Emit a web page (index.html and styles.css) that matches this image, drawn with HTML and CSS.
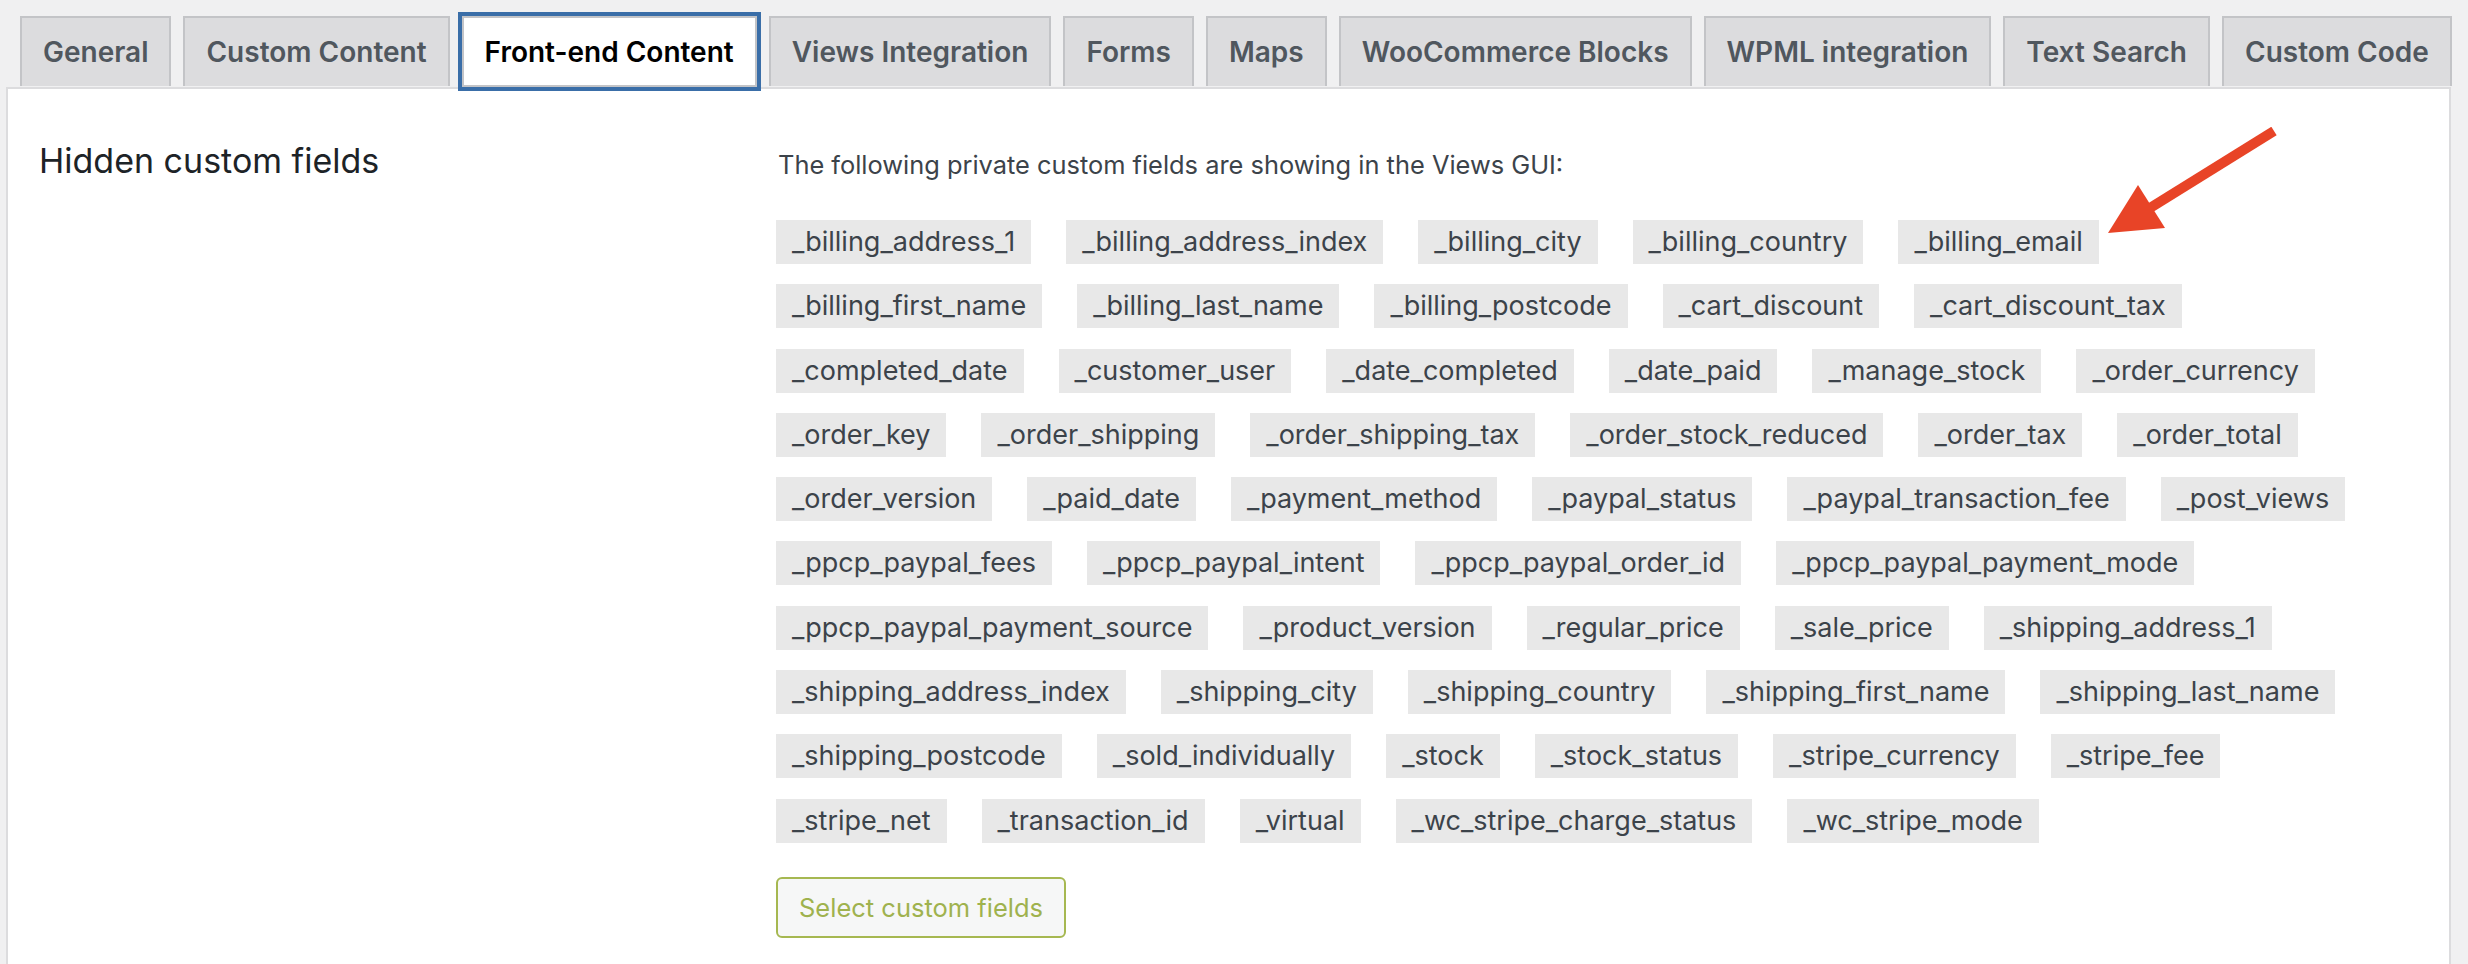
FILE: index.html
```html
<!DOCTYPE html>
<html>
<head>
<meta charset="utf-8">
<title>Settings</title>
<link rel="stylesheet" href="styles.css">
</head>
<body>
<div class="wrap">

	<!-- onglets des réglages -->
	<nav class="tabs">
		<a class="tab" href="#">General</a>
		<a class="tab" href="#">Custom Content</a>
		<a class="tab tab-active" href="#">Front-end Content</a>
		<a class="tab" href="#">Views Integration</a>
		<a class="tab" href="#">Forms</a>
		<a class="tab" href="#">Maps</a>
		<a class="tab" href="#">WooCommerce Blocks</a>
		<a class="tab" href="#">WPML integration</a>
		<a class="tab" href="#">Text Search</a>
		<a class="tab" href="#">Custom Code</a>
	</nav>

	<div class="panel">
		<div class="row">
			<h2 class="row-title">Hidden custom fields</h2>
			<div class="row-body">
				<p class="intro">The following private custom fields are showing in the Views GUI:</p>
				<div class="field-list">
					<span class="field">_billing_address_1</span>
					<span class="field">_billing_address_index</span>
					<span class="field">_billing_city</span>
					<span class="field">_billing_country</span>
					<span class="field">_billing_email</span>
					<span class="field">_billing_first_name</span>
					<span class="field">_billing_last_name</span>
					<span class="field">_billing_postcode</span>
					<span class="field">_cart_discount</span>
					<span class="field">_cart_discount_tax</span>
					<span class="field">_completed_date</span>
					<span class="field">_customer_user</span>
					<span class="field">_date_completed</span>
					<span class="field">_date_paid</span>
					<span class="field">_manage_stock</span>
					<span class="field">_order_currency</span>
					<span class="field">_order_key</span>
					<span class="field">_order_shipping</span>
					<span class="field">_order_shipping_tax</span>
					<span class="field">_order_stock_reduced</span>
					<span class="field">_order_tax</span>
					<span class="field">_order_total</span>
					<span class="field">_order_version</span>
					<span class="field">_paid_date</span>
					<span class="field">_payment_method</span>
					<span class="field">_paypal_status</span>
					<span class="field">_paypal_transaction_fee</span>
					<span class="field">_post_views</span>
					<span class="field">_ppcp_paypal_fees</span>
					<span class="field">_ppcp_paypal_intent</span>
					<span class="field">_ppcp_paypal_order_id</span>
					<span class="field">_ppcp_paypal_payment_mode</span>
					<span class="field">_ppcp_paypal_payment_source</span>
					<span class="field">_product_version</span>
					<span class="field">_regular_price</span>
					<span class="field">_sale_price</span>
					<span class="field">_shipping_address_1</span>
					<span class="field">_shipping_address_index</span>
					<span class="field">_shipping_city</span>
					<span class="field">_shipping_country</span>
					<span class="field">_shipping_first_name</span>
					<span class="field">_shipping_last_name</span>
					<span class="field">_shipping_postcode</span>
					<span class="field">_sold_individually</span>
					<span class="field">_stock</span>
					<span class="field">_stock_status</span>
					<span class="field">_stripe_currency</span>
					<span class="field">_stripe_fee</span>
					<span class="field">_stripe_net</span>
					<span class="field">_transaction_id</span>
					<span class="field">_virtual</span>
					<span class="field">_wc_stripe_charge_status</span>
					<span class="field">_wc_stripe_mode</span>
				</div>
				<button class="btn-select" type="button">Select custom fields</button>
			</div>
		</div>

		<!-- flèche rouge -->
		<svg class="pointer" width="180" height="110" viewBox="0 0 180 110">
			<line x1="172" y1="4" x2="48" y2="81" stroke="#e84427" stroke-width="10"/>
			<polygon points="6,106 36,58 63,101" fill="#e84427"/>
		</svg>
	</div>

</div>
</body>
</html>
```

FILE: styles.css
```css
body {
margin: 0;
background-color: #f0f0f1;
font-family: Inter, "Liberation Sans", sans-serif;
color: #3c434a;
}
.wrap {
padding-top: 16px;
padding-left: 6px;
padding-right: 17px;
}

/* onglets */
.tabs {
display: flex;
gap: 12px;
padding-left: 14px;
}
.tab {
display: flex;
align-items: center;
height: 70px;
box-sizing: border-box;
padding: 0 21px;
background: #dcdcde;
border: 2px solid #c3c4c7;
border-bottom: none;
color: #50575e;
font-size: 28px;
font-weight: 600;
text-decoration: none;
white-space: nowrap;
}
.tab-active {
position: relative;
z-index: 2;
height: 71px;
background: #fff;
color: #000;
border-bottom: 2px solid #c3c4c7;
box-shadow: 0 0 0 4px #3a6ea8;
}

/* bloc principal */
.panel {
position: relative;
min-height: 900px;
background: #fff;
border: 2px solid #dcdcde;
padding: 50px 0 0 31px;
}
.row {
display: flex;
align-items: flex-start;
}
.row-title {
flex: 0 0 737px;
margin: 0;
font-size: 34px;
line-height: 44px;
font-weight: 400;
color: #1d2327;
}
.row-body {
padding-top: 8px;
}
.intro {
margin: 0 0 37px 2px;
font-size: 25.4px;
line-height: 36px;
color: #3c434a;
}
.field-list {
display: flex;
flex-wrap: wrap;
gap: 20.3px 35px;
max-width: 1580px;
}
.field {
height: 44px;
line-height: 44px;
padding: 0 16px;
background: #e8e8e8;
font-size: 27px;
color: #3c434a;
}
.btn-select {
display: block;
margin-top: 34px;
height: 61px;
padding: 0 21px;
background: #f6f7f7;
border: 2px solid #a6b851;
border-radius: 6px;
color: #9fb24e;
font-family: inherit;
font-size: 25.5px;
}

/* flèche posée par-dessus */
.pointer {
position: absolute;
left: 2094px;
top: 38px;
}
```
